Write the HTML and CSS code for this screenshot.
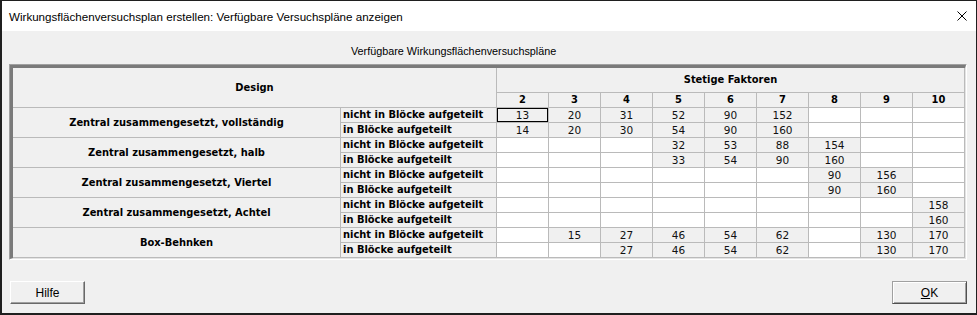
FILE: index.html
```html
<!DOCTYPE html>
<html lang="de">
<head>
<meta charset="utf-8">
<title>Wirkungsflächenversuchsplan</title>
<link rel="stylesheet" href="styles.css">
</head>
<body>
<div class="window">
  <div class="titlebar">
    <span class="title">Wirkungsflächenversuchsplan erstellen: Verfügbare Versuchspläne anzeigen</span>
    <svg class="close" width="10" height="10" viewBox="0 0 10 10"><path d="M0.5 0.5 L9.5 9.5 M9.5 0.5 L0.5 9.5" stroke="#000" stroke-width="1" fill="none"/></svg>
  </div>
  <div class="content">
    <div class="caption">Verfügbare Wirkungsflächenversuchspläne</div>
    <div class="frame">
      <div class="frame-inner">
        <div class="grid">
          <div class="cell head design">Design</div>
          <div class="cell head factors">Stetige Faktoren</div>
          <div class="cell head">2</div><div class="cell head">3</div><div class="cell head">4</div><div class="cell head">5</div><div class="cell head">6</div><div class="cell head">7</div><div class="cell head">8</div><div class="cell head">9</div><div class="cell head">10</div>

          <div class="cell group">Zentral zusammengesetzt, vollständig</div>
          <div class="cell sub">nicht in Blöcke aufgeteilt</div>
          <div class="cell num val focus">13</div><div class="cell num val">20</div><div class="cell num val">31</div><div class="cell num val">52</div><div class="cell num val">90</div><div class="cell num val">152</div><div class="cell num"></div><div class="cell num"></div><div class="cell num"></div>
          <div class="cell sub">in Blöcke aufgeteilt</div>
          <div class="cell num val">14</div><div class="cell num val">20</div><div class="cell num val">30</div><div class="cell num val">54</div><div class="cell num val">90</div><div class="cell num val">160</div><div class="cell num"></div><div class="cell num"></div><div class="cell num"></div>

          <div class="cell group">Zentral zusammengesetzt, halb</div>
          <div class="cell sub">nicht in Blöcke aufgeteilt</div>
          <div class="cell num"></div><div class="cell num"></div><div class="cell num"></div><div class="cell num val">32</div><div class="cell num val">53</div><div class="cell num val">88</div><div class="cell num val">154</div><div class="cell num"></div><div class="cell num"></div>
          <div class="cell sub">in Blöcke aufgeteilt</div>
          <div class="cell num"></div><div class="cell num"></div><div class="cell num"></div><div class="cell num val">33</div><div class="cell num val">54</div><div class="cell num val">90</div><div class="cell num val">160</div><div class="cell num"></div><div class="cell num"></div>

          <div class="cell group">Zentral zusammengesetzt, Viertel</div>
          <div class="cell sub">nicht in Blöcke aufgeteilt</div>
          <div class="cell num"></div><div class="cell num"></div><div class="cell num"></div><div class="cell num"></div><div class="cell num"></div><div class="cell num"></div><div class="cell num val">90</div><div class="cell num val">156</div><div class="cell num"></div>
          <div class="cell sub">in Blöcke aufgeteilt</div>
          <div class="cell num"></div><div class="cell num"></div><div class="cell num"></div><div class="cell num"></div><div class="cell num"></div><div class="cell num"></div><div class="cell num val">90</div><div class="cell num val">160</div><div class="cell num"></div>

          <div class="cell group">Zentral zusammengesetzt, Achtel</div>
          <div class="cell sub">nicht in Blöcke aufgeteilt</div>
          <div class="cell num"></div><div class="cell num"></div><div class="cell num"></div><div class="cell num"></div><div class="cell num"></div><div class="cell num"></div><div class="cell num"></div><div class="cell num"></div><div class="cell num val">158</div>
          <div class="cell sub">in Blöcke aufgeteilt</div>
          <div class="cell num"></div><div class="cell num"></div><div class="cell num"></div><div class="cell num"></div><div class="cell num"></div><div class="cell num"></div><div class="cell num"></div><div class="cell num"></div><div class="cell num val">160</div>

          <div class="cell group">Box-Behnken</div>
          <div class="cell sub">nicht in Blöcke aufgeteilt</div>
          <div class="cell num"></div><div class="cell num val">15</div><div class="cell num val">27</div><div class="cell num val">46</div><div class="cell num val">54</div><div class="cell num val">62</div><div class="cell num"></div><div class="cell num val">130</div><div class="cell num val">170</div>
          <div class="cell sub">in Blöcke aufgeteilt</div>
          <div class="cell num"></div><div class="cell num"></div><div class="cell num val">27</div><div class="cell num val">46</div><div class="cell num val">54</div><div class="cell num val">62</div><div class="cell num"></div><div class="cell num val">130</div><div class="cell num val">170</div>
        </div>
      </div>
    </div>
    <div class="buttons">
      <button class="btn">Hilfe</button>
      <button class="btn default"><u>O</u>K</button>
    </div>
  </div>
</div>
</body>
</html>
```
FILE: styles.css
```css
html, body {
  margin: 0;
  padding: 0;
  background: #f0f0f0;
}

.window {
  width: 977px;
  height: 315px;
  box-sizing: border-box;
  border: 1px solid #1f1f1f;
  border-left-width: 2px;
  border-bottom-width: 2px;
  background: #f0f0f0;
  display: flex;
  flex-direction: column;
  overflow: hidden;
}

.titlebar {
  height: 30px;
  flex: none;
  background: #fff;
  display: flex;
  align-items: center;
  justify-content: space-between;
  padding: 0 9px 0 7px;
  font-family: "Liberation Sans", Arial, sans-serif;
  font-size: 11.6px;
  color: #000;
}

.close {
  display: block;
}

.content {
  padding: 0 9px 0 7px;
  display: flex;
  flex-direction: column;
}

.caption {
  margin-top: 12px;
  height: 16px;
  line-height: 16px;
  padding-left: 342px;
  font-family: "Liberation Sans", Arial, sans-serif;
  font-size: 10.8px;
  color: #000;
}

.frame {
  margin-top: 5px;
  width: 958px;
  box-sizing: border-box;
  border: 1px solid;
  border-color: #a0a0a0 #ffffff #ffffff #a0a0a0;
}

.frame-inner {
  border-style: solid;
  border-width: 3px 1px 1px 3px;
  border-color: #7a7a7a #e3e3e3 #e3e3e3 #7a7a7a;
}

.grid {
  display: grid;
  grid-template-columns: 327px 155px repeat(9, 51px);
  grid-template-rows: 24px 14px repeat(10, 14px);
  gap: 1px;
  padding: 0 1px 1px 0;
  background: #bababa;
  font-family: "DejaVu Sans Condensed", "DejaVu Sans", sans-serif;
  font-stretch: condensed;
  font-size: 11px;
  color: #000;
}

.cell {
  background: #f0f0f0;
  line-height: 14px;
  white-space: nowrap;
  overflow: hidden;
}

.head {
  font-weight: bold;
  text-align: center;
}

.design {
  grid-column: 1 / 3;
  grid-row: 1 / 3;
  display: flex;
  align-items: center;
  justify-content: center;
}

.factors {
  grid-column: 3 / 12;
  grid-row: 1;
  display: flex;
  align-items: center;
  justify-content: center;
}

.group {
  grid-column: 1;
  grid-row: span 2;
  font-weight: bold;
  display: flex;
  align-items: center;
  justify-content: center;
}

.sub {
  grid-column: 2;
  font-weight: bold;
  padding-left: 2px;
}

.num {
  background: #ffffff;
  text-align: center;
  font-family: "DejaVu Sans", sans-serif;
  font-stretch: normal;
  font-size: 10.5px;
  color: #111;
}

.num.val {
  background: #f0f0f0;
}

.focus {
  box-shadow: inset 0 0 0 1px #000;
}

.buttons {
  margin-top: 21px;
  padding-left: 1px;
  display: flex;
  justify-content: space-between;
}

.btn {
  width: 75px;
  height: 23px;
  box-sizing: border-box;
  margin: 0;
  padding: 0;
  border: 1px solid;
  border-color: #ffffff #696969 #696969 #ffffff;
  box-shadow: inset -1px -1px 0 #a0a0a0;
  background: #f0f0f0;
  font-family: "Liberation Sans", Arial, sans-serif;
  font-size: 12px;
  color: #000;
  border-radius: 0;
}

.btn.default {
  border-color: #a0a0a0 #505050 #505050 #a0a0a0;
  box-shadow: inset 1px 1px 0 #ffffff, inset -1px -1px 0 #a0a0a0;
}

.btn u {
  text-decoration: underline;
}
```
